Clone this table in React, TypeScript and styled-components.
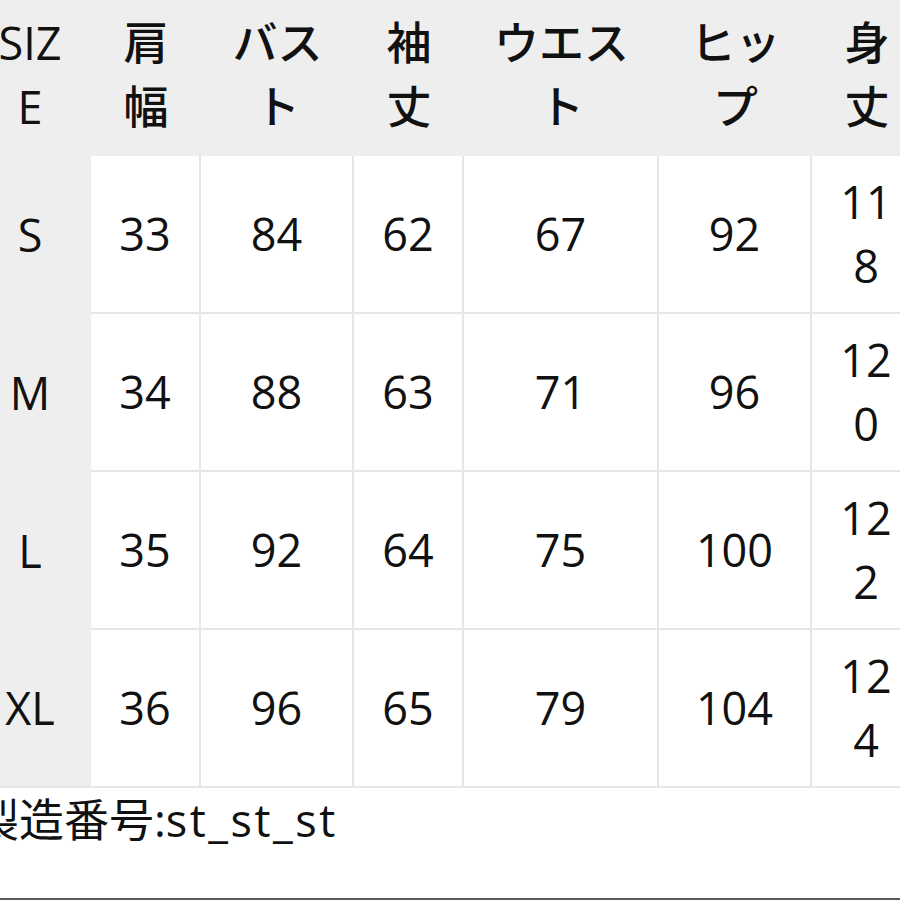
import React from 'react'
import styled, { createGlobalStyle } from 'styled-components'

const GlobalStyle = createGlobalStyle`
  html, body {
    margin: 0;
    padding: 0;
    background: #ffffff;
  }
  body {
    font-family: "Open Sans", "Noto Sans CJK JP", sans-serif;
    color: #111111;
  }
`

const Page = styled.div`
  width: 900px;
  height: 900px;
  box-sizing: border-box;
  overflow: hidden;
  background: #ffffff;
  border-bottom: 2px solid #5b5b5b;
`

const Sheet = styled.div`
  margin-left: -31px;
  width: 960px;
`

const SizeTable = styled.div`
  display: grid;
  grid-template-columns: 122px 110px 153px 110px 195px 153px 110px;
  grid-template-rows: 156px repeat(4, 158px);
  background: #eeeeee;
`

const Cell = styled.div<{ $body?: boolean; $last?: boolean; $head?: boolean }>`
  box-sizing: border-box;
  display: flex;
  align-items: center;
  justify-content: center;
  padding: 0 22px;
  text-align: center;
  font-size: 45px;
  line-height: 64px;
  font-weight: ${p => (p.$head ? 500 : 400)};
  word-break: break-all;
  background: ${p => (p.$body ? '#ffffff' : 'transparent')};
  border-right: ${p => (p.$body ? '2px solid #e6e6e6' : 'none')};
  border-bottom: ${p => (p.$body || p.$last ? '2px solid #e6e6e6' : 'none')};
`

const HeadText = styled.span`
  margin-top: -6px;
`

const Note = styled.div`
  padding-left: 5px;
  font-size: 45px;
  line-height: 64px;
  white-space: nowrap;
`

const Code = styled.span`
  letter-spacing: 2.5px;
`

const headers = ['SIZE', '肩幅', 'バスト', '袖丈', 'ウエスト', 'ヒップ', '身丈']

const rows = [
  ['S', '33', '84', '62', '67', '92', '118'],
  ['M', '34', '88', '63', '71', '96', '120'],
  ['L', '35', '92', '64', '75', '100', '122'],
  ['XL', '36', '96', '65', '79', '104', '124'],
]

export default function App() {
  return (
    <Page>
      <GlobalStyle />
      <Sheet>
        <SizeTable>
          {headers.map(h => (
            <Cell key={h} $head={h !== 'SIZE'}>
              <HeadText>{h}</HeadText>
            </Cell>
          ))}
          {rows.map((row, i) =>
            row.map((v, j) => (
              <Cell key={`${i}-${j}`} $body={j > 0} $last={j === 0 && i === rows.length - 1}>
                {v}
              </Cell>
            ))
          )}
        </SizeTable>
        <Note>
          製造番号:<Code>st_st_st</Code>
        </Note>
      </Sheet>
    </Page>
  )
}
